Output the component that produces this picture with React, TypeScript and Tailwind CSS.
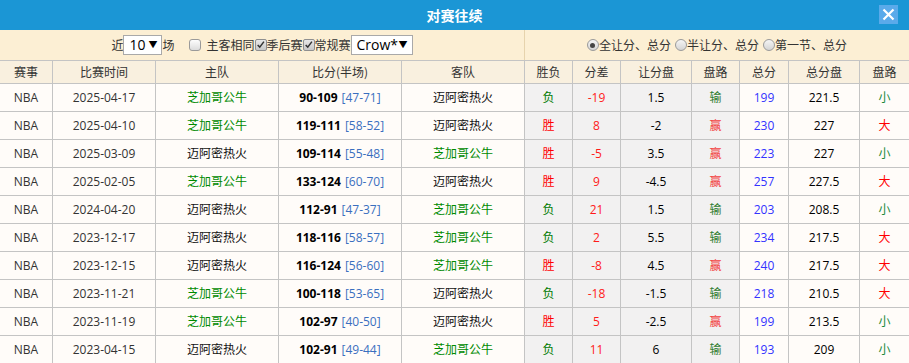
import React from "react";

type Row = {
  date: string;
  home: string;
  homeGreen: boolean;
  score: string;
  half: string;
  away: string;
  wl: string;
  diff: string;
  hc: string;
  hcRes: string;
  total: string;
  ou: string;
  ouRes: string;
};

const CHI = "芝加哥公牛";
const MIA = "迈阿密热火";

const rows: Row[] = [
  { date: "2025-04-17", home: CHI, homeGreen: true, score: "90-109", half: "[47-71]", away: MIA, wl: "负", diff: "-19", hc: "1.5", hcRes: "输", total: "199", ou: "221.5", ouRes: "小" },
  { date: "2025-04-10", home: CHI, homeGreen: true, score: "119-111", half: "[58-52]", away: MIA, wl: "胜", diff: "8", hc: "-2", hcRes: "赢", total: "230", ou: "227", ouRes: "大" },
  { date: "2025-03-09", home: MIA, homeGreen: false, score: "109-114", half: "[55-48]", away: CHI, wl: "胜", diff: "-5", hc: "3.5", hcRes: "赢", total: "223", ou: "227", ouRes: "小" },
  { date: "2025-02-05", home: CHI, homeGreen: true, score: "133-124", half: "[60-70]", away: MIA, wl: "胜", diff: "9", hc: "-4.5", hcRes: "赢", total: "257", ou: "227.5", ouRes: "大" },
  { date: "2024-04-20", home: MIA, homeGreen: false, score: "112-91", half: "[47-37]", away: CHI, wl: "负", diff: "21", hc: "1.5", hcRes: "输", total: "203", ou: "208.5", ouRes: "小" },
  { date: "2023-12-17", home: MIA, homeGreen: false, score: "118-116", half: "[58-57]", away: CHI, wl: "负", diff: "2", hc: "5.5", hcRes: "输", total: "234", ou: "217.5", ouRes: "大" },
  { date: "2023-12-15", home: MIA, homeGreen: false, score: "116-124", half: "[56-60]", away: CHI, wl: "胜", diff: "-8", hc: "4.5", hcRes: "赢", total: "240", ou: "217.5", ouRes: "大" },
  { date: "2023-11-21", home: CHI, homeGreen: true, score: "100-118", half: "[53-65]", away: MIA, wl: "负", diff: "-18", hc: "-1.5", hcRes: "输", total: "218", ou: "210.5", ouRes: "大" },
  { date: "2023-11-19", home: CHI, homeGreen: true, score: "102-97", half: "[40-50]", away: MIA, wl: "胜", diff: "5", hc: "-2.5", hcRes: "赢", total: "199", ou: "213.5", ouRes: "小" },
  { date: "2023-04-15", home: MIA, homeGreen: false, score: "102-91", half: "[49-44]", away: CHI, wl: "负", diff: "11", hc: "6", hcRes: "输", total: "193", ou: "209", ouRes: "小" },
];

const GRID =
  "grid grid-cols-[53px_103px_123px_123px_123px_48px_48px_71px_48px_49px_71px_49px]";

const headers = ["赛事", "比赛时间", "主队", "比分(半场)", "客队", "胜负", "分差", "让分盘", "盘路", "总分", "总分盘", "盘路"];

function Checkbox({ checked }: { checked: boolean }) {
  if (!checked) {
    return (
      <span className="inline-block shrink-0 w-[12px] h-[12px] rounded-[3px] border border-[#9a9a9a] bg-gradient-to-b from-[#fdfdfd] to-[#dcdcdc]" />
    );
  }
  return (
    <span className="relative inline-block shrink-0 w-[12px] h-[12px] rounded-[2px] border border-[#8f8f8f] bg-gradient-to-b from-[#e8e8e8] to-[#c8c8c8]">
      <svg viewBox="0 0 12 12" className="absolute left-0 top-0 w-[10px] h-[10px]">
        <path d="M2 6 L4.5 8.5 L9.5 2" fill="none" stroke="#333" strokeWidth="1.8" />
      </svg>
    </span>
  );
}

function Radio({ checked }: { checked: boolean }) {
  return (
    <span className="relative inline-flex shrink-0 items-center justify-center w-[12px] h-[12px] rounded-full border border-[#9a9a9a] bg-gradient-to-b from-[#f5f5f5] to-[#d4d4d4]">
      {checked && <span className="w-[5px] h-[5px] rounded-full bg-[#444]" />}
    </span>
  );
}

function Select({ text, w }: { text: string; w: string }) {
  return (
    <span
      className={`relative shrink-0 inline-flex items-center h-[20px] border border-[#a9a9a9] bg-white pl-[5px] text-[14px] text-black ${w}`}
    >
      <span className="leading-none [font-family:'Open_Sans',sans-serif]">{text}</span>
      <span className="absolute right-[4px] top-[4px] text-[9px] leading-none">▼</span>
    </span>
  );
}

export default function App() {
  return (
    <div className="w-[909px] h-[363px] overflow-hidden bg-white [font-family:'Open_Sans','Noto_Sans_CJK_SC',sans-serif] text-[12px] text-[#333]">
      {/* Title bar */}
      <div className="relative h-[30px] bg-[#1b96d5] flex items-center justify-center">
        <span className="text-white text-[14px] font-bold [font-family:'Noto_Sans_CJK_SC',sans-serif]">对赛往续</span>
        <span className="absolute left-[879px] top-[5px] w-[19px] h-[19px] bg-[#5aaaea] flex items-center justify-center">
          <svg viewBox="0 0 19 19" className="w-[19px] h-[19px]">
            <path d="M4.5 4.5 L14.5 14.5 M14.5 4.5 L4.5 14.5" stroke="white" strokeWidth="2.2" />
          </svg>
        </span>
      </div>

      {/* Filter bar */}
      <div className="flex h-[31px] bg-[#fcefd4] border-b border-[#c4c4c4] [font-family:'Noto_Sans_CJK_SC',sans-serif]">
        <div className="w-[525px] border-r border-[#e6d3ad] flex items-center justify-center">
          <span>近</span>
          <Select text="10" w="w-[39px]" />
          <span>场</span>
          <span className="ml-[15px] mr-[5px] flex items-center"><Checkbox checked={false} /></span>
          <span>主客相同</span>
          <Checkbox checked={true} />
          <span>季后赛</span>
          <Checkbox checked={true} />
          <span>常规赛</span>
          <Select text="Crow*" w="w-[62px]" />
        </div>
        <div className="flex-1 flex items-center justify-center">
          <Radio checked={true} />
          <span>全让分、总分</span>
          <span className="ml-[4px] flex"><Radio checked={false} /></span>
          <span>半让分、总分</span>
          <span className="ml-[4px] flex"><Radio checked={false} /></span>
          <span>第一节、总分</span>
        </div>
      </div>

      {/* Header */}
      <div className={`${GRID} h-[23px] bg-[#f9f0df]`}>
        {headers.map((h, i) => (
          <div
            key={i}
            className={`flex items-center justify-center border-b border-[#c4c4c4] ${i < 11 ? "border-r" : ""} [font-family:'Noto_Sans_CJK_SC',sans-serif]`}
          >
            {h}
          </div>
        ))}
      </div>

      {/* Rows */}
      {rows.map((r, idx) => {
        const cell = "flex items-center justify-center border-b border-r border-[#c4c4c4]";
        const light = "bg-[#fffcf9]";
        const gray = "bg-[#f2f1f1]";
        const green = "text-[#008a00]";
        return (
          <div key={idx} className={`${GRID} h-[28px]`}>
            <div className={`${cell} ${light}`}>NBA</div>
            <div className={`${cell} ${light}`}>{r.date}</div>
            <div className={`${cell} ${light} ${r.homeGreen ? green : "text-[#111]"}`}>{r.home}</div>
            <div className={`${cell} ${light}`}>
              <span className="font-bold text-black">{r.score}</span>
              <span className="ml-[4px] text-[#3a6fbf]">{r.half}</span>
            </div>
            <div className={`${cell} ${light} ${r.homeGreen ? "text-[#111]" : green}`}>{r.away}</div>
            <div className={`${cell} ${gray} ${r.wl === "胜" ? "text-[#ff0000]" : "text-[#007a00]"}`}>{r.wl}</div>
            <div className={`${cell} ${gray} text-[#ff1a1a]`}>{r.diff}</div>
            <div className={`${cell} ${gray} text-black`}>{r.hc}</div>
            <div className={`${cell} ${gray} ${r.hcRes === "赢" ? "text-[#f24040]" : "text-[#2f7d2f]"}`}>{r.hcRes}</div>
            <div className={`${cell} ${light} text-[#3333ff]`}>{r.total}</div>
            <div className={`${cell} ${light} text-black`}>{r.ou}</div>
            <div className={`flex items-center justify-center border-b border-[#c4c4c4] ${light} ${r.ouRes === "大" ? "text-[#ff0000]" : "text-[#1a8a3a]"}`}>{r.ouRes}</div>
          </div>
        );
      })}
    </div>
  );
}
